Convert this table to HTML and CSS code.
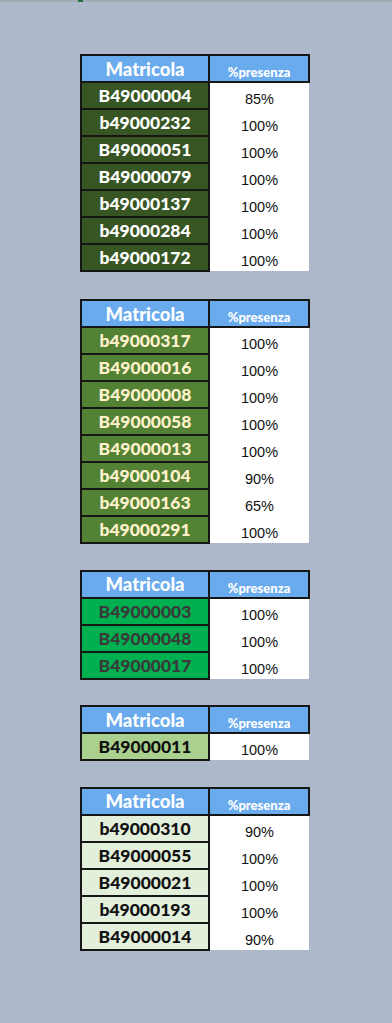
FILE: index.html
```html
<!DOCTYPE html>
<html lang="it">
<head>
  <meta charset="UTF-8" />
  <meta name="viewport" content="width=device-width, initial-scale=1.0"/>
  <title>Presenze</title>
  <link rel="stylesheet" href="styles.css">
</head>
<body>

  <div class="top-strip"><span class="cell-mark"></span></div>

  <main class="groups">

    <!-- Gruppo 1 -->
    <table class="presenze g1">
      <tr><th class="h-mat">Matricola</th><th class="h-pres">%presenza</th></tr>
      <tr><td class="mat">B49000004</td><td class="pres">85%</td></tr>
      <tr><td class="mat">b49000232</td><td class="pres">100%</td></tr>
      <tr><td class="mat">B49000051</td><td class="pres">100%</td></tr>
      <tr><td class="mat">B49000079</td><td class="pres">100%</td></tr>
      <tr><td class="mat">b49000137</td><td class="pres">100%</td></tr>
      <tr><td class="mat">b49000284</td><td class="pres">100%</td></tr>
      <tr><td class="mat">b49000172</td><td class="pres">100%</td></tr>
    </table>

    <!-- Gruppo 2 -->
    <table class="presenze g2">
      <tr><th class="h-mat">Matricola</th><th class="h-pres">%presenza</th></tr>
      <tr><td class="mat">b49000317</td><td class="pres">100%</td></tr>
      <tr><td class="mat">B49000016</td><td class="pres">100%</td></tr>
      <tr><td class="mat">B49000008</td><td class="pres">100%</td></tr>
      <tr><td class="mat">B49000058</td><td class="pres">100%</td></tr>
      <tr><td class="mat">B49000013</td><td class="pres">100%</td></tr>
      <tr><td class="mat">b49000104</td><td class="pres">90%</td></tr>
      <tr><td class="mat">b49000163</td><td class="pres">65%</td></tr>
      <tr><td class="mat">b49000291</td><td class="pres">100%</td></tr>
    </table>

    <!-- Gruppo 3 -->
    <table class="presenze g3">
      <tr><th class="h-mat">Matricola</th><th class="h-pres">%presenza</th></tr>
      <tr><td class="mat">B49000003</td><td class="pres">100%</td></tr>
      <tr><td class="mat">B49000048</td><td class="pres">100%</td></tr>
      <tr><td class="mat">B49000017</td><td class="pres">100%</td></tr>
    </table>

    <!-- Gruppo 4 -->
    <table class="presenze g4">
      <tr><th class="h-mat">Matricola</th><th class="h-pres">%presenza</th></tr>
      <tr><td class="mat">B49000011</td><td class="pres">100%</td></tr>
    </table>

    <!-- Gruppo 5 -->
    <table class="presenze g5">
      <tr><th class="h-mat">Matricola</th><th class="h-pres">%presenza</th></tr>
      <tr><td class="mat">b49000310</td><td class="pres">90%</td></tr>
      <tr><td class="mat">B49000055</td><td class="pres">100%</td></tr>
      <tr><td class="mat">B49000021</td><td class="pres">100%</td></tr>
      <tr><td class="mat">b49000193</td><td class="pres">100%</td></tr>
      <tr><td class="mat">B49000014</td><td class="pres">90%</td></tr>
    </table>

  </main>

</body>
</html>
```

FILE: styles.css
```css
:root {
  --sfondo: #adb9cb;
  --bordo: #161616;
  --intestazione: #6aabee;
  --bianco: #fff;
  --font-foglio: Lato, 'Open Sans', sans-serif;
  --font-numeri: 'Liberation Sans', Arial, sans-serif;
}
* { box-sizing: border-box; margin: 0; padding: 0; }
body {
  background: var(--sfondo);
  min-height: 100vh;
  font-family: var(--font-foglio);
}

.top-strip {
  height: 2px;
  background: #a3abb7;
  padding-left: 78px;
}
.cell-mark {
  display: block;
  width: 5px;
  height: 2px;
  background: #217346;
}

.groups {
  display: flex;
  flex-direction: column;
  align-items: flex-start;
  gap: 25.5px;
  padding: 52px 0 0 80px;
}
.groups .g2 { margin-top: 1.5px; }

/* Tabelle presenze */
.presenze {
  border-collapse: collapse;
  table-layout: fixed;
  width: 230px;
}
.presenze tr { height: 27px; }
.presenze th,
.presenze td {
  padding: 0;
  text-align: center;
  white-space: nowrap;
}
.presenze th {
  background: var(--intestazione);
  color: var(--bianco);
  border: 2px solid var(--bordo);
  font-weight: 900;
}
.h-mat {
  width: 128px;
  font-size: 18.5px;
  vertical-align: middle;
}
.h-pres {
  font-size: 13px;
  vertical-align: bottom;
  padding-bottom: 1px !important;
}
.mat {
  border: 2px solid var(--bordo);
  font-size: 17.5px;
  font-weight: 900;
  vertical-align: middle;
}
.pres {
  background: var(--bianco);
  font-family: var(--font-numeri);
  font-size: 14.5px;
  color: #111;
  vertical-align: bottom;
  padding-bottom: 2px !important;
}

.g1 .mat { background: #375623; color: #fff; }
.g2 .mat { background: #548235; color: #fff2cc; }
.g3 .mat { background: #00b050; color: #3a3a3a; }
.g4 .mat { background: #a9d08e; color: #111; }
.g5 .mat { background: #e2efda; color: #111; }
```
